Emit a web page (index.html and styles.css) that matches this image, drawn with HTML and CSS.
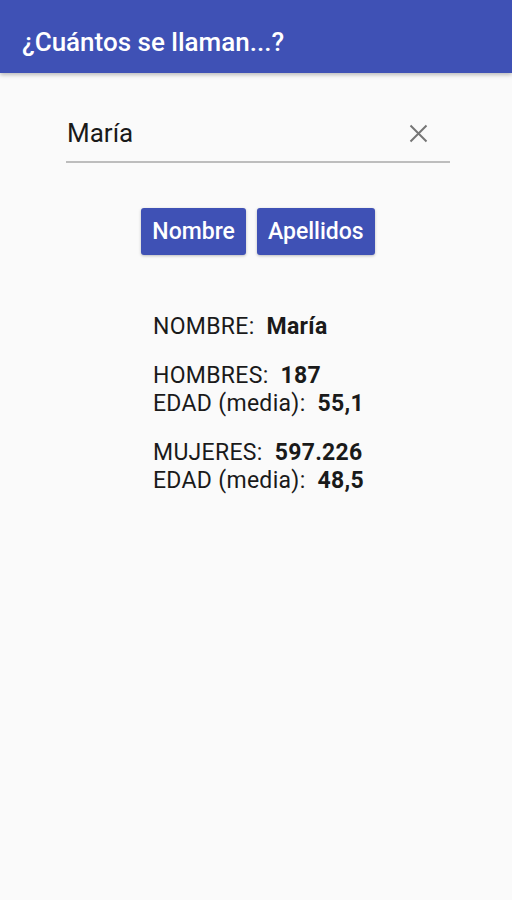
FILE: index.html
```html
<!DOCTYPE html>
<html>
<head>
  <title>¿Cuántos se llaman...?</title>
  <link rel="stylesheet" href="styles.css">
</head>
<body>
  <div id="header">
    <h1>¿Cuántos se llaman...?</h1>
  </div>

  <div id="content">
    <div class="search">
      <span class="search-text">María</span>
      <svg class="clear-icon" width="19" height="19" viewBox="0 0 19 19">
        <path d="M1.5 1.5 L17.5 17.5 M17.5 1.5 L1.5 17.5" stroke="#757575" stroke-width="2" fill="none"/>
      </svg>
    </div>

    <div class="buttons">
      <button class="btn">Nombre</button>
      <button class="btn">Apellidos</button>
    </div>

    <div class="results">
      <div class="group">
        <div>NOMBRE:&nbsp; <b>María</b></div>
      </div>
      <div class="group">
        <div>HOMBRES:&nbsp; <b>187</b></div>
        <div>EDAD (media):&nbsp; <b>55,1</b></div>
      </div>
      <div class="group">
        <div>MUJERES:&nbsp; <b>597.226</b></div>
        <div>EDAD (media):&nbsp; <b>48,5</b></div>
      </div>
    </div>
  </div>
</body>
</html>
```

FILE: styles.css
```css
body {
  font-family: Roboto, "Noto Sans", sans-serif;
  margin: 0;
  padding: 0;
  background-color: #fafafa;
  color: #212121;
}

#header {
  background-color: #3f51b5;
  color: #fff;
  height: 73px;
  box-sizing: border-box;
  padding: 10px 22px 0;
  display: flex;
  align-items: center;
  box-shadow: 0 2px 4px rgba(0, 0, 0, 0.25);
}

#header h1 {
  font-size: 26px;
  font-weight: 500;
  margin: 0;
}

#content {
  padding: 0 62px 0 66px;
}

.search {
  margin-top: 38px;
  height: 44px;
  padding: 0 22px 6px 1px;
  border-bottom: 2px solid #bdbdbd;
  display: flex;
  align-items: center;
  justify-content: space-between;
}

.search-text {
  font-size: 26px;
  color: #1a1a1a;
}

.buttons {
  display: flex;
  justify-content: center;
  gap: 11px;
  margin-top: 45px;
}

.btn {
  background-color: #3f51b5;
  color: #fff;
  border: none;
  border-radius: 3px;
  height: 47px;
  padding: 0 11px;
  font-family: Roboto, sans-serif;
  font-size: 23px;
  font-weight: 500;
  box-shadow: 0 1px 3px rgba(0, 0, 0, 0.25);
}

.results {
  margin-top: 58px;
  padding-left: 87px;
  font-size: 23px;
  letter-spacing: 0.3px;
  line-height: 28px;
  color: #1a1a1a;
}

.group {
  margin-bottom: 21px;
}

.group b {
  font-weight: 700;
}
```
